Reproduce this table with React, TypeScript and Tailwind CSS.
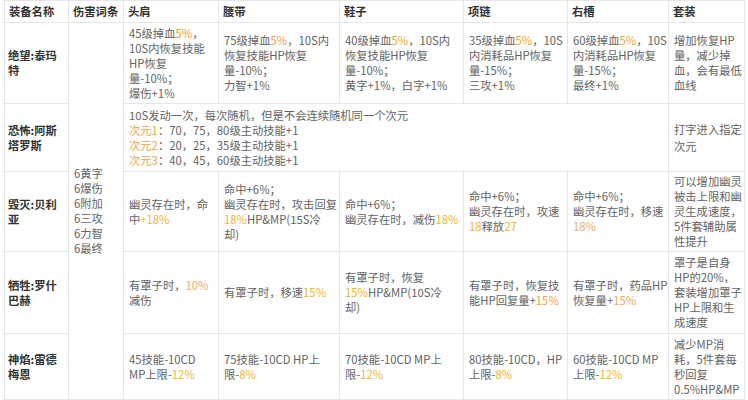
import React from "react";

const O = ({ children, c = "text-[#f2a23c]" }: { children: React.ReactNode; c?: string }) => (
  <span className={c}>{children}</span>
);

const Y = "text-[#f3b52f]";
const L = "text-[#ecac72]";

const td = "border border-[#e4e8ec] pl-[5px] pr-[2px] align-middle whitespace-nowrap";
const th = "border border-[#e4e8ec] pl-[4px] pr-[2px] align-middle text-left font-bold text-[#333]";
const nameCls = "border border-[#e4e8ec] pl-[3px] pr-[2px] align-middle font-bold text-[#333] whitespace-nowrap";

export default function App() {
  return (
    <div className="w-[748px] h-[400px] bg-white overflow-hidden">
      <table
        className="ml-[4px] w-[740px] table-fixed border-collapse text-[11.3px] leading-[15px] text-[#636363]"
        style={{ fontFamily: '"Noto Sans CJK SC", "Noto Sans", sans-serif' }}
      >
        <colgroup>
          <col className="w-[64px]" />
          <col className="w-[55px]" />
          <col className="w-[95px]" />
          <col className="w-[121px]" />
          <col className="w-[124px]" />
          <col className="w-[104px]" />
          <col className="w-[101px]" />
          <col className="w-[76px]" />
        </colgroup>
        <tbody>
          <tr className="h-[22px]">
            <th className={th}>装备名称</th>
            <th className={th}>伤害词条</th>
            <th className={th}>头肩</th>
            <th className={th}>腰带</th>
            <th className={th}>鞋子</th>
            <th className={th}>项链</th>
            <th className={th}>右槽</th>
            <th className={th}>套装</th>
          </tr>
          <tr className="h-[81px]">
            <td className={nameCls}>
              绝望:泰玛
              <br />特
            </td>
            <td className={td} rowSpan={5}>
              6黄字
              <br />6爆伤
              <br />6附加
              <br />6三攻
              <br />6力智
              <br />6最终
            </td>
            <td className={td}>
              45级掉血<O>5%</O>，
              <br />10S内恢复技能
              <br />HP恢复
              <br />量-10%；
              <br />爆伤+1%
            </td>
            <td className={td}>
              75级掉血<O>5%</O>，10S内
              <br />恢复技能HP恢复
              <br />量-10%；
              <br />力智+1%
            </td>
            <td className={td}>
              40级掉血<O>5%</O>，10S内
              <br />恢复技能HP恢复
              <br />量-10%；
              <br />黄字+1%，白字+1%
            </td>
            <td className={td}>
              35级掉血<O>5%</O>，10S
              <br />内消耗品HP恢复
              <br />量-15%；
              <br />三攻+1%
            </td>
            <td className={td}>
              60级掉血<O>5%</O>，10S
              <br />内消耗品HP恢复
              <br />量-15%；
              <br />最终+1%
            </td>
            <td className={td}>
              增加恢复HP
              <br />量，减少掉
              <br />血，会有最低
              <br />血线
            </td>
          </tr>
          <tr className="h-[68px]">
            <td className={nameCls}>
              恐怖:阿斯
              <br />塔罗斯
            </td>
            <td className={td} colSpan={5}>
              10S发动一次，每次随机，但是不会连续随机同一个次元
              <br />
              <O>次元1</O>：70，75，80级主动技能+1
              <br />
              <O>次元2</O>：20，25，35级主动技能+1
              <br />
              <O>次元3</O>：40，45，60级主动技能+1
            </td>
            <td className={td}>
              <div className="leading-[17px]">
                打字进入指定
                <br />次元
              </div>
            </td>
          </tr>
          <tr className="h-[80px]">
            <td className={nameCls}>
              毁灭:贝利
              <br />亚
            </td>
            <td className={td}>
              幽灵存在时，命
              <br />中<O c={Y}>+18%</O>
            </td>
            <td className={td}>
              命中+6%；
              <br />幽灵存在时，攻击回复
              <br />
              <O c={Y}>18%</O>HP&amp;MP(15S冷
              <br />却)
            </td>
            <td className={td}>
              命中+6%；
              <br />幽灵存在时，减伤<O c={Y}>18%</O>
            </td>
            <td className={td}>
              命中+6%；
              <br />幽灵存在时，攻速
              <br />
              <O c={Y}>18</O>释放<O c={Y}>27</O>
            </td>
            <td className={td}>
              命中+6%；
              <br />幽灵存在时，移速
              <br />
              <O c={L}>18%</O>
            </td>
            <td className={td}>
              可以增加幽灵
              <br />被击上限和幽
              <br />灵生成速度，
              <br />5件套辅助属
              <br />性提升
            </td>
          </tr>
          <tr className="h-[82px]">
            <td className={nameCls}>
              牺牲:罗什
              <br />巴赫
            </td>
            <td className={td}>
              有罩子时，<O c={L}>10%</O>
              <br />减伤
            </td>
            <td className={td}>
              有罩子时，移速<O c={Y}>15%</O>
            </td>
            <td className={td}>
              有罩子时，恢复
              <br />
              <O c={Y}>15%</O>HP&amp;MP(10S冷
              <br />却)
            </td>
            <td className={td}>
              有罩子时，恢复技
              <br />能HP回复量+<O>15%</O>
            </td>
            <td className={td}>
              有罩子时，药品HP
              <br />恢复量+<O c={L}>15%</O>
            </td>
            <td className={td}>
              罩子是自身
              <br />HP的20%，
              <br />套装增加罩子
              <br />HP上限和生
              <br />成速度
            </td>
          </tr>
          <tr className="h-[66px]">
            <td className={nameCls}>
              神焰:雷德
              <br />梅恩
            </td>
            <td className={td}>
              45技能-10CD
              <br />MP上限-<O c={Y}>12%</O>
            </td>
            <td className={td}>
              75技能-10CD HP上
              <br />限-<O c={Y}>8%</O>
            </td>
            <td className={td}>
              70技能-10CD MP上
              <br />限-<O c={Y}>12%</O>
            </td>
            <td className={td}>
              80技能-10CD，HP
              <br />上限-<O c={Y}>8%</O>
            </td>
            <td className={td}>
              60技能-10CD MP
              <br />上限-<O c={Y}>12%</O>
            </td>
            <td className={td}>
              减少MP消
              <br />耗，5件套每
              <br />秒回复
              <br />0.5%HP&amp;MP
            </td>
          </tr>
        </tbody>
      </table>
    </div>
  );
}
